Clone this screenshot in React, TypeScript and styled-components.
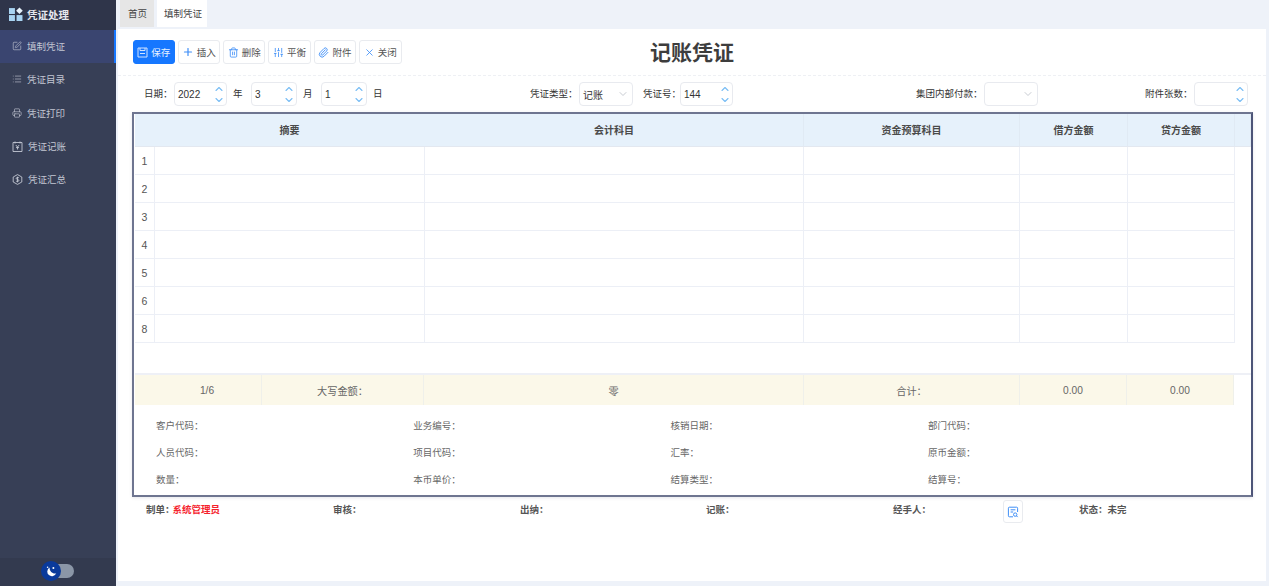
import React, { FC } from 'react';
import styled, { createGlobalStyle } from 'styled-components';
import {
  ChevronDown,
  ChevronUp,
  List,
  Paperclip,
  Plus,
  Printer,
  SlidersVertical,
  SquarePen,
  Trash2,
  X,
} from 'lucide-react';

const GlobalStyle = createGlobalStyle`
  html, body {
    margin: 0;
    padding: 0;
    height: 100%;
    background: #eef2f9;
    font-family: "Liberation Sans", "Noto Sans CJK SC", sans-serif;
    font-size: 9.5px;
    color: #444;
    overflow: hidden;
  }
  * { box-sizing: border-box; }
`;

const Page = styled.div`
  display: flex;
  width: 1269px;
  height: 586px;
`;

const Sidebar = styled.aside`
  width: 116px;
  height: 586px;
  flex: none;
  display: flex;
  flex-direction: column;
  background: #373f56;
`;

const Brand = styled.div`
  height: 30px;
  display: flex;
  align-items: center;
  gap: 4px;
  padding: 0 0 2px 9px;
  background: #2f354a;
  color: #e6e8ee;
  font-size: 10.5px;
  font-weight: 700;
`;

const Menu = styled.nav`
  flex: 1;
`;

const MenuItem = styled.div<{ $active?: boolean }>`
  height: 33.3px;
  display: flex;
  align-items: center;
  gap: 5px;
  padding: 0 0 1px 12px;
  color: #c3c7d3;
  background: ${(p) => (p.$active ? '#3a4570' : 'transparent')};
  border-right: 2px solid ${(p) => (p.$active ? '#1677ff' : 'transparent')};
`;

const SidebarFoot = styled.div`
  height: 28px;
  padding-bottom: 2px;
  display: flex;
  align-items: center;
  justify-content: center;
  background: #333a4f;
`;

const Toggle = styled.div`
  position: relative;
  width: 32px;
  height: 14px;
  border-radius: 7px;
  background: #8b96a7;
`;

const Knob = styled.div`
  position: absolute;
  left: -1px;
  top: -3px;
  width: 20px;
  height: 20px;
  border-radius: 50%;
  background: #0a3a9b;
  display: flex;
  align-items: center;
  justify-content: center;
`;

const Main = styled.main`
  flex: 1;
  min-width: 0;
  display: flex;
  flex-direction: column;
`;

const Tabs = styled.div`
  height: 27px;
  margin-bottom: 2px;
  padding-left: 4px;
  display: flex;
  gap: 3px;
`;

const Tab = styled.div<{ $active?: boolean }>`
  display: flex;
  align-items: center;
  padding: 0 0 1px ${(p) => (p.$active ? '7px' : '8px')};
  width: ${(p) => (p.$active ? '50px' : '34px')};
  background: ${(p) => (p.$active ? '#fff' : '#e6e6e6')};
  color: #444;
  white-space: nowrap;
`;

const Content = styled.div`
  width: 1148px;
  margin-left: 2px;
  height: 552px;
  background: #fff;
`;

const Toolbar = styled.div`
  height: 47px;
  padding: 11px 15px 0;
  display: grid;
  grid-template-columns: 1fr auto 1fr;
  align-items: start;
  border-bottom: 1px dashed #eef0f4;
`;

const Buttons = styled.div`
  display: flex;
  gap: 3px;
`;

const ToolButton = styled.div<{ $primary?: boolean }>`
  width: ${(p) => (p.$primary ? '41.6px' : '42.4px')};
  height: 24px;
  display: flex;
  align-items: center;
  justify-content: center;
  gap: 3px;
  border-radius: 3px;
  white-space: nowrap;
  border: 1px solid ${(p) => (p.$primary ? '#1677ff' : '#e9ebef')};
  background: ${(p) => (p.$primary ? '#1677ff' : '#fff')};
  color: ${(p) => (p.$primary ? '#e8f2ff' : '#555')};
  svg {
    color: ${(p) => (p.$primary ? '#cfe3ff' : '#3e8ef7')};
    flex: none;
  }
`;

const Title = styled.h1`
  margin: -2px 0 0;
  font-size: 21px;
  line-height: 30px;
  font-weight: 700;
  color: #3d3d3d;
`;

const FormRow = styled.div`
  height: 36px;
  padding: 6px 0 6px 26px;
  display: flex;
`;

const FieldGroup = styled.div<{ $offset?: number }>`
  display: flex;
  align-items: center;
  margin-left: ${(p) => p.$offset ?? 0}px;
  color: #333;
  white-space: nowrap;
`;

const Label = styled.span<{ $w: number; $gap?: number }>`
  width: ${(p) => p.$w}px;
  margin-left: ${(p) => p.$gap ?? 0}px;
  padding-bottom: 2px;
`;

const Unit = styled.span`
  width: 24px;
  padding: 0 0 2px 6px;
`;

const InputBox = styled.div<{ $w: number }>`
  width: ${(p) => p.$w}px;
  height: 24px;
  border: 1px solid #e8eaef;
  border-radius: 4px;
  padding-left: 3px;
  display: flex;
  align-items: center;
  justify-content: space-between;
  color: #333;
  font-size: 10px;
`;

const Steps = styled.div`
  display: flex;
  flex-direction: column;
  color: #79bdf5;
  margin-right: 1px;
  svg {
    display: block;
  }
  svg + svg {
    margin-top: -1px;
  }
`;

const Caret = styled.span`
  color: #b4b9c2;
  margin-right: 3px;
  display: flex;
`;

const VoucherBox = styled.div`
  margin: 0 13px 0 14px;
  height: 385px;
  border: 2px solid #6e7590;
  border-right-color: #4d5578;
  box-shadow: 0 1px 3px rgba(80, 90, 120, 0.15);
  display: flex;
  flex-direction: column;
  padding-left: 1px;
`;

const columns = '20px 270px 379px 216px 108px 107px';

const HeadRow = styled.div`
  height: 33px;
  display: grid;
  grid-template-columns: ${columns} 1fr;
  background: #e6f1fb;
  border-bottom: 1px solid #e3e8f0;
`;

const HeadCell = styled.div<{ $plain?: boolean }>`
  display: flex;
  align-items: center;
  justify-content: center;
  padding-bottom: 1px;
  font-size: 10px;
  font-weight: 700;
  color: #4a4a4a;
  border-right: 1px solid ${(p) => (p.$plain ? 'transparent' : '#e0eaf4')};
`;

const BodyRow = styled.div`
  width: 1100px;
  height: 28px;
  display: grid;
  grid-template-columns: ${columns};
  border-bottom: 1px solid #eceff6;
`;

const BodyCell = styled.div`
  display: flex;
  align-items: center;
  justify-content: center;
  color: #555;
  border-right: 1px solid #eceff6;
  font-size: 10.5px;
`;

const EmptyArea = styled.div`
  height: 32px;
  border-bottom: 2px solid #eef0f6;
`;

const SummaryRow = styled.div`
  width: 1099px;
  height: 30px;
  display: grid;
  grid-template-columns: 127px 162px 380px 216px 107px 107px;
  background: #fbf8e9;
`;

const SummaryCell = styled.div<{ $inset?: number }>`
  display: flex;
  align-items: center;
  justify-content: center;
  padding-left: ${(p) => p.$inset ?? 0}px;
  color: #666;
  border-right: 1px solid #eff0ea;
  font-size: 10.2px;
`;

const InfoGrid = styled.div`
  padding: 7px 0 0 21px;
  display: grid;
  grid-template-columns: repeat(4, 257.3px);
  grid-auto-rows: 26.7px;
  align-items: center;
  color: #666;
`;

const SignRow = styled.div`
  margin: 3px 0 0 14px;
  height: 24px;
  display: grid;
  grid-template-columns: 187px 187px 186px 187px 110px 76px auto;
  padding-left: 14px;
  align-items: start;
  line-height: 20px;
  font-weight: 700;
  color: #555;
`;

const Maker = styled.span`
  margin-left: -2px;
  color: #f5222d;
`;

const IconButton = styled.div`
  width: 20px;
  height: 23px;
  border: 1px solid #e9ebef;
  border-radius: 3px;
  display: flex;
  align-items: center;
  justify-content: center;
`;

const LogoIcon = () => (
  <svg width="14" height="14" viewBox="0 0 13 13" fill="#a9d4f2">
    <rect x="0" y="1" width="5.5" height="5.5" />
    <rect x="0" y="7.5" width="5.5" height="5.5" />
    <rect x="7" y="7.5" width="5.5" height="5.5" />
    <path d="M9.7 0.4 12.8 3.5 9.7 6.6 6.6 3.5Z" fill="#e6f2fb" />
  </svg>
);

const VoucherIcon = () => (
  <svg width="11" height="11" viewBox="0 0 11 11" fill="none" stroke="#c3c7d3" strokeWidth="0.9">
    <path d="M1 1.5h9v9H1z" />
    <path d="M3 .5v2M8 .5v2M3.8 4l1.7 2 1.7-2M5.5 6v2.5M4 6.6h3" />
  </svg>
);

const SummaryIcon = () => (
  <svg width="11" height="11" viewBox="0 0 11 11" fill="none" stroke="#c3c7d3" strokeWidth="0.9">
    <path d="M5.5.6 9.8 3v5l-4.3 2.4L1.2 8V3z" />
    <path d="M7 3.9C6.4 3.3 4.2 3.2 4.2 4.4c0 1.3 2.7.8 2.7 2.1 0 1.2-2.2 1.2-2.9.5M5.5 2.7v5.6" />
  </svg>
);

const SaveIcon = () => (
  <svg width="11" height="11" viewBox="0 0 11 11" fill="none" stroke="currentColor" strokeWidth="1">
    <path d="M1 1h9v9H1zM3 1v2.5h5V1M3 6.5h5" />
  </svg>
);

const MoonIcon = () => (
  <svg width="13" height="13" viewBox="0 0 13 13" fill="#fff">
    <path d="M4.6 2.6a4.6 4.6 0 1 0 6.6 5.6C8 9.2 4.4 6.4 4.6 2.6Z" />
    <circle cx="2.6" cy="2.2" r="0.8" />
    <circle cx="8.4" cy="3" r="1" />
  </svg>
);

const ReportIcon = () => (
  <svg width="12" height="12" viewBox="0 0 12 12" fill="none" stroke="#3e8ef7" strokeWidth="1">
    <path d="M6 10.8H2.4a1 1 0 0 1-1-1V2.2a1 1 0 0 1 1-1h7.2a1 1 0 0 1 1 1V6" />
    <path d="M3.6 3.8h4.8M3.6 6h2.6" />
    <circle cx="8.2" cy="8.6" r="1.7" />
    <path d="m9.5 9.9 1.2 1.2" />
  </svg>
);

const Stepper: FC<{ width: number; value?: string }> = ({ width, value }) => (
  <InputBox $w={width}>
    <span>{value}</span>
    <Steps>
      <ChevronUp size={12} strokeWidth={2.2} />
      <ChevronDown size={12} strokeWidth={2.2} />
    </Steps>
  </InputBox>
);

const Dropdown: FC<{ width: number; value?: string }> = ({ width, value }) => (
  <InputBox $w={width}>
    <span>{value}</span>
    <Caret>
      <ChevronDown size={12} strokeWidth={1.5} />
    </Caret>
  </InputBox>
);

const menu = [
  { label: '填制凭证', icon: <SquarePen size={10} strokeWidth={1.5} /> },
  { label: '凭证目录', icon: <List size={10} strokeWidth={1.5} /> },
  { label: '凭证打印', icon: <Printer size={10} strokeWidth={1.5} /> },
  { label: '凭证记账', icon: <VoucherIcon /> },
  { label: '凭证汇总', icon: <SummaryIcon /> },
];

const tools = [
  { label: '插入', icon: <Plus size={12} strokeWidth={2.4} /> },
  { label: '删除', icon: <Trash2 size={11} strokeWidth={1.8} /> },
  { label: '平衡', icon: <SlidersVertical size={11} strokeWidth={1.8} /> },
  { label: '附件', icon: <Paperclip size={11} strokeWidth={2} /> },
  { label: '关闭', icon: <X size={11} strokeWidth={1.8} /> },
];

const headers = ['', '摘要', '会计科目', '资金预算科目', '借方金额', '贷方金额', ''];
const rowNumbers = ['1', '2', '3', '4', '5', '6', '8'];
const info = [
  '客户代码：', '业务编号：', '核销日期：', '部门代码：',
  '人员代码：', '项目代码：', '汇率：', '原币金额：',
  '数量：', '本币单价：', '结算类型：', '结算号：',
];

export default function App() {
  return (
    <Page>
      <GlobalStyle />
      <Sidebar>
        <Brand>
          <LogoIcon />
          凭证处理
        </Brand>
        <Menu>
          {menu.map((item, index) => (
            <MenuItem key={item.label} $active={index === 0}>
              {item.icon}
              {item.label}
            </MenuItem>
          ))}
        </Menu>
        <SidebarFoot>
          <Toggle>
            <Knob>
              <MoonIcon />
            </Knob>
          </Toggle>
        </SidebarFoot>
      </Sidebar>
      <Main>
        <Tabs>
          <Tab>首页</Tab>
          <Tab $active>填制凭证</Tab>
        </Tabs>
        <Content>
          <Toolbar>
            <Buttons>
              <ToolButton $primary>
                <SaveIcon />
                保存
              </ToolButton>
              {tools.map((tool) => (
                <ToolButton key={tool.label}>
                  {tool.icon}
                  {tool.label}
                </ToolButton>
              ))}
            </Buttons>
            <Title>记账凭证</Title>
          </Toolbar>
          <FormRow>
            <FieldGroup>
              <Label $w={30}>日期：</Label>
              <Stepper width={53} value="2022" />
              <Unit>年</Unit>
              <Stepper width={46} value="3" />
              <Unit>月</Unit>
              <Stepper width={46} value="1" />
              <Unit>日</Unit>
            </FieldGroup>
            <FieldGroup $offset={139}>
              <Label $w={49}>凭证类型：</Label>
              <Dropdown width={54} value="记账" />
              <Label $w={37} $gap={10}>凭证号：</Label>
              <Stepper width={53} value="144" />
            </FieldGroup>
            <FieldGroup $offset={183}>
              <Label $w={68}>集团内部付款：</Label>
              <Dropdown width={54} />
            </FieldGroup>
            <FieldGroup $offset={107}>
              <Label $w={49}>附件张数：</Label>
              <Stepper width={54} />
            </FieldGroup>
          </FormRow>
          <VoucherBox>
            <HeadRow>
              {headers.map((text, index) => (
                <HeadCell key={`head-${index}`} $plain={index < 2}>{text}</HeadCell>
              ))}
            </HeadRow>
            {rowNumbers.map((num) => (
              <BodyRow key={num}>
                <BodyCell>{num}</BodyCell>
                <BodyCell />
                <BodyCell />
                <BodyCell />
                <BodyCell />
                <BodyCell />
              </BodyRow>
            ))}
            <EmptyArea />
            <SummaryRow>
              <SummaryCell $inset={18}>1/6</SummaryCell>
              <SummaryCell>大写金额：</SummaryCell>
              <SummaryCell>零</SummaryCell>
              <SummaryCell>合计：</SummaryCell>
              <SummaryCell>0.00</SummaryCell>
              <SummaryCell>0.00</SummaryCell>
            </SummaryRow>
            <InfoGrid>
              {info.map((text) => (
                <span key={text}>{text}</span>
              ))}
            </InfoGrid>
          </VoucherBox>
          <SignRow>
            <span>
              制单：<Maker>系统管理员</Maker>
            </span>
            <span>审核：</span>
            <span>出纳：</span>
            <span>记账：</span>
            <span>经手人：</span>
            <IconButton>
              <ReportIcon />
            </IconButton>
            <span>状态：未完</span>
          </SignRow>
        </Content>
      </Main>
    </Page>
  );
}
